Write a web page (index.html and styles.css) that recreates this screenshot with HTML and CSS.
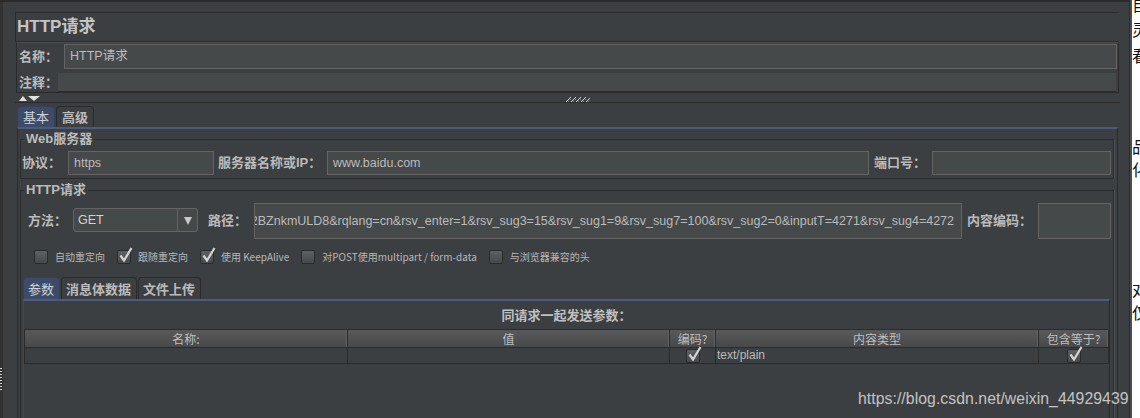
FILE: index.html
```html
<!DOCTYPE html>
<html>
<head>
<meta charset="utf-8">
<title>HTTP请求</title>
<link rel="stylesheet" href="styles.css">
</head>
<body>
<div class="screen">
  <div class="app">
    <div class="gutter">
      <div class="edge"><div class="edge-dots"></div></div>
    </div>
    <div class="main">
      <div class="titlebox">HTTP请求</div>
      <div class="namepanel">
        <div class="nrow nrow-name"><span class="lbl lbl-name">名称：</span><div class="field field-name">HTTP请求</div></div>
        <div class="nrow nrow-comment"><span class="lbl lbl-comment">注释：</span><div class="field field-flat"></div></div>
      </div>
      <div class="splitter">
        <div class="arrows"><span class="tri-up"></span><span class="tri-down"></span></div>
        <svg class="grip" width="24" height="5" viewBox="0 0 24 5">
          <g fill="#d6d6d6">
            <rect x="0" y="4" width="1" height="1"/><rect x="1" y="3" width="1" height="1"/><rect x="2" y="2" width="1" height="1"/><rect x="3" y="1" width="1" height="1"/><rect x="4" y="0" width="1" height="1"/>
            <rect x="5" y="4" width="1" height="1"/><rect x="6" y="3" width="1" height="1"/><rect x="7" y="2" width="1" height="1"/><rect x="8" y="1" width="1" height="1"/><rect x="9" y="0" width="1" height="1"/>
            <rect x="10" y="4" width="1" height="1"/><rect x="11" y="3" width="1" height="1"/><rect x="12" y="2" width="1" height="1"/><rect x="13" y="1" width="1" height="1"/><rect x="14" y="0" width="1" height="1"/>
            <rect x="15" y="4" width="1" height="1"/><rect x="16" y="3" width="1" height="1"/><rect x="17" y="2" width="1" height="1"/><rect x="18" y="1" width="1" height="1"/><rect x="19" y="0" width="1" height="1"/>
            <rect x="20" y="4" width="1" height="1"/><rect x="21" y="3" width="1" height="1"/><rect x="22" y="2" width="1" height="1"/><rect x="23" y="1" width="1" height="1"/>
          </g>
          <g fill="#8a8a8a">
            <rect x="2" y="4" width="1" height="1"/><rect x="4" y="2" width="1" height="1"/><rect x="7" y="4" width="1" height="1"/><rect x="9" y="2" width="1" height="1"/><rect x="12" y="4" width="1" height="1"/><rect x="14" y="2" width="1" height="1"/><rect x="17" y="4" width="1" height="1"/><rect x="19" y="2" width="1" height="1"/><rect x="22" y="4" width="1" height="1"/>
          </g>
        </svg>
      </div>
      <div class="tabs tabs-outer">
        <div class="tab sel">基本</div>
        <div class="tab">高级</div>
      </div>
      <div class="tabbody">
        <fieldset class="group group-web">
          <legend>Web服务器</legend>
          <div class="frow">
            <span class="lbl w-proto">协议：</span>
            <div class="field f-proto">https</div>
            <span class="lbl w-server">服务器名称或IP：</span>
            <div class="field f-server">www.baidu.com</div>
            <span class="lbl w-port">端口号：</span>
            <div class="field f-port"></div>
          </div>
        </fieldset>
        <fieldset class="group group-http">
          <legend>HTTP请求</legend>
          <div class="frow method-row">
            <span class="lbl w-method">方法：</span>
            <div class="combo">
              <span class="combo-text">GET</span>
              <span class="combo-btn"><span class="tri-combo"></span></span>
            </div>
            <span class="lbl w-path">路径：</span>
            <div class="field f-path"><span class="path-text">%2BZnkmULD8&amp;rqlang=cn&amp;rsv_enter=1&amp;rsv_sug3=15&amp;rsv_sug1=9&amp;rsv_sug7=100&amp;rsv_sug2=0&amp;inputT=4271&amp;rsv_sug4=4272</span></div>
            <span class="lbl w-enc">内容编码：</span>
            <div class="field f-enc"></div>
          </div>
          <div class="checks">
            <div class="chk"><span class="cb"></span><span class="chk-lbl">自动重定向</span></div>
            <div class="chk"><span class="cb"><svg class="mark" width="15" height="16" viewBox="0 0 15 16"><path d="M2.5 8.5 L6 13.5 L13.5 1" fill="none" stroke="#d4d4d4" stroke-width="2.2"/></svg></span><span class="chk-lbl">跟随重定向</span></div>
            <div class="chk"><span class="cb"><svg class="mark" width="15" height="16" viewBox="0 0 15 16"><path d="M2.5 8.5 L6 13.5 L13.5 1" fill="none" stroke="#d4d4d4" stroke-width="2.2"/></svg></span><span class="chk-lbl">使用 KeepAlive</span></div>
            <div class="chk"><span class="cb"></span><span class="chk-lbl">对POST使用multipart / form-data</span></div>
            <div class="chk"><span class="cb"></span><span class="chk-lbl">与浏览器兼容的头</span></div>
          </div>
          <div class="tabs tabs-inner">
            <div class="tab sel">参数</div>
            <div class="tab">消息体数据</div>
            <div class="tab">文件上传</div>
          </div>
          <div class="innerbody">
            <div class="caption">同请求一起发送参数：</div>
            <div class="table">
              <div class="th">名称:</div>
              <div class="th">值</div>
              <div class="th">编码?</div>
              <div class="th">内容类型</div>
              <div class="th">包含等于?</div>
              <div class="td"></div>
              <div class="td"></div>
              <div class="td td-c"><span class="cb cb-tbl"><svg class="mark" width="15" height="16" viewBox="0 0 15 16"><path d="M2.5 8.5 L6 13.5 L13.5 1" fill="none" stroke="#d4d4d4" stroke-width="2.2"/></svg></span></div>
              <div class="td td-text">text/plain</div>
              <div class="td td-c"><span class="cb cb-tbl"><svg class="mark" width="15" height="16" viewBox="0 0 15 16"><path d="M2.5 8.5 L6 13.5 L13.5 1" fill="none" stroke="#d4d4d4" stroke-width="2.2"/></svg></span></div>
            </div>
          </div>
        </fieldset>
      </div>
    </div>
  </div>
  <div class="sep"></div>
  <div class="foreign">
    <span class="fc fc1">自</span>
    <span class="fc fc2">灵</span>
    <span class="fc fc3">看</span>
    <span class="fc fc4">品</span>
    <span class="fc fc5">化</span>
    <span class="fc fc6">对</span>
    <span class="fc fc7">仅</span>
  </div>
  <div class="watermark">https://blog.csdn.net/weixin_44929439</div>
</div>
</body>
</html>
```

FILE: styles.css
```css
* { box-sizing: border-box; }
html, body { margin: 0; padding: 0; }
body {
  background: #3c3f41;
  color: #bbbbbb;
  font-family: "Liberation Sans", "Noto Sans CJK SC", sans-serif;
  font-size: 13px;
}
.screen {
  position: relative;
  display: flex;
  width: 1140px;
  height: 418px;
  overflow: hidden;
}
.app {
  flex: none;
  width: 1129px;
  height: 418px;
  border-top: 2px solid #2b2b2b;
  display: flex;
}
.gutter { flex: none; width: 15px; display: flex; }
.edge { width: 3px; background: #303234; }
.edge-dots {
  margin-top: 366px;
  width: 2px;
  height: 22px;
  background: repeating-linear-gradient(to bottom, #d8d8d8 0 1px, transparent 1px 3px);
}
.main {
  flex: none;
  width: 1105px;
  padding-top: 10px;
  display: flex;
  flex-direction: column;
}

/* title */
.titlebox {
  width: 1104px;
  height: 30px;
  border: 1px solid #2b2b2b;
  border-right: 0;
  padding-left: 1px;
  font: bold 17px/28px "Liberation Sans", "Noto Sans CJK SC", sans-serif;
  color: #c4c4c4;
}

/* name / comment */
.namepanel {
  margin-left: 1px;
  width: 1103px;
  height: 51px;
  border: 1px solid #2b2b2b;
  border-top-color: #4d5052;
  padding: 1px 1px 0 1px;
  display: flex;
  flex-direction: column;
}
.nrow { display: flex; align-items: center; }
.nrow-name { height: 25px; }
.nrow-comment { height: 19px; margin-top: 4px; }
.lbl {
  flex: none;
  font: bold 13px/16px "Liberation Sans", "Noto Sans CJK SC", sans-serif;
  color: #bbbbbb;
  white-space: nowrap;
}
.lbl-name { width: 46px; padding-left: 1px; }
.lbl-comment { width: 40px; padding-left: 1px; }
.field {
  flex: none;
  height: 24px;
  background: #45494a;
  border: 1px solid #646464;
  color: #bbbbbb;
  font: 12.5px/22px "Liberation Sans", "Noto Sans CJK SC", sans-serif;
  padding-left: 5px;
  white-space: nowrap;
  overflow: hidden;
}
.field-name { flex: 1; height: 25px; line-height: 23px; }
.field-flat { flex: 1; height: 19px; border: 0; border-bottom: 1px solid #2b2b2b; margin-right: 1px; }

/* splitter */
.splitter {
  width: 1105px;
  height: 11px;
  border-bottom: 1px solid #2b2b2b;
  display: flex;
  align-items: flex-start;
}
.arrows { display: flex; margin: 3px 0 0 4px; }
.tri-up {
  width: 0; height: 0;
  border-left: 4.5px solid transparent;
  border-right: 4.5px solid transparent;
  border-bottom: 5px solid #e0e0e0;
}
.tri-down {
  margin-left: 1px;
  width: 0; height: 0;
  border-left: 6.5px solid transparent;
  border-right: 6.5px solid transparent;
  border-top: 5px solid #e0e0e0;
}
.grip { display: block; margin: 4px 0 0 526px; }

/* tabs */
.tabs { display: flex; height: 21px; }
.tabs-outer { margin: 3px 0 0 2px; }
.tab {
  height: 21px;
  padding: 0 5px;
  border: 1px solid #2b2b2b;
  border-bottom: 0;
  border-radius: 4px 4px 0 0;
  font: bold 13px/20px "Noto Sans CJK SC", sans-serif;
  color: #bbbbbb;
  margin-right: 1px;
  white-space: nowrap;
}
.tab.sel {
  background: #3d4b69;
  font-weight: normal;
  color: #cdd2da;
  border-color: #35405a;
}
.tabbody {
  flex: 1;
  margin-left: 2px;
  width: 1101px;
  border-top: 2px solid #4a5b7d;
  border-left: 1px solid #2b2b2b;
  border-right: 1px solid #2b2b2b;
  padding: 0 2px;
}

/* group boxes */
.group {
  margin: 2px 0 0 0;
  width: 1094px;
  border: 1px solid #2a2c2e;
  box-shadow: 1px 0 0 #4e5153;
  padding: 4px 0 3px 0;
}
.group legend {
  margin-left: 3px;
  padding: 0 2px;
  font: bold 13px/16px "Liberation Sans", "Noto Sans CJK SC", sans-serif;
  color: #bbbbbb;
}
.group-http { margin-top: 3px; padding-top: 5px; height: 260px; }
.frow { display: flex; align-items: center; height: 24px; }
.w-proto { width: 47px; padding-left: 1px; }
.f-proto { width: 146px; }
.w-server { width: 113px; padding-left: 4px; }
.f-server { width: 542px; }
.w-port { width: 63px; padding-left: 5px; }
.f-port { width: 179px; }

.method-row { height: 36px; }
.w-method { width: 52px; padding-left: 7px; }
.combo {
  flex: none;
  width: 125px;
  height: 24px;
  margin-top: -2px;
  display: flex;
  border: 1px solid #646464;
  border-radius: 3px;
  background: #45494a;
}
.combo-text {
  flex: 1;
  padding-left: 4px;
  font: 12.5px/22px "Liberation Sans", sans-serif;
  color: #d2d2d2;
}
.combo-btn {
  width: 20px;
  border-left: 1px solid #646464;
  display: flex;
  align-items: center;
  justify-content: center;
}
.tri-combo {
  width: 0; height: 0;
  border-left: 4.5px solid transparent;
  border-right: 4.5px solid transparent;
  border-top: 8px solid #c8c8c8;
  margin-top: 1px;
}
.w-path { width: 56px; padding-left: 10px; }
.f-path {
  width: 708px;
  height: 36px;
  display: flex;
  justify-content: flex-end;
  align-items: center;
  padding: 0 7px 0 0;
  font-size: 12.5px;
}
.path-text { flex: none; }
.w-enc { width: 76px; padding-left: 5px; }
.f-enc { width: 73px; height: 36px; }

/* checkboxes */
.checks {
  display: flex;
  align-items: center;
  height: 14px;
  margin-top: 11px;
  padding-left: 1px;
}
.chk { display: flex; align-items: center; margin-left: 12px; }
.cb {
  flex: none;
  display: block;
  width: 14px;
  height: 14px;
  border: 1px solid #2b2b2b;
  border-radius: 2px;
  background: linear-gradient(#5d6163, #46494b);
}
.mark { display: block; margin: -4px 0 0 0; }
.chk-lbl {
  margin-left: 7px;
  font: 10px/14px "Noto Sans CJK SC", sans-serif;
  color: #b8b8b8;
  white-space: nowrap;
}

/* inner tabs */
.tabs-inner { margin: 13px 0 0 2px; height: 22px; }
.tabs-inner .tab { height: 22px; line-height: 21px; padding: 0 5px 0 4px; }
.innerbody {
  margin-left: 2px;
  width: 1087px;
  height: 140px;
  border-top: 2px solid #4a5b7d;
  border-left: 1px solid #474a4c;
  border-right: 1px solid #2b2b2b;
}
.caption {
  height: 28px;
  font: bold 13px/30px "Liberation Sans", "Noto Sans CJK SC", sans-serif;
  color: #c0c0c0;
  text-align: center;
}
.table {
  width: 1084px;
  display: grid;
  grid-template-columns: 323px 322px 46px 323px 70px;
  border-top: 1px solid #2b2b2b;
  border-left: 1px solid #2b2b2b;
}
.th {
  height: 18px;
  border-right: 1px solid #2b2b2b;
  border-bottom: 1px solid #2b2b2b;
  box-shadow: inset -1px 0 0 #5f6264;
  background: linear-gradient(#57595b, #47494b);
  font: 12px/17px "Noto Sans CJK SC", sans-serif;
  color: #bfbfbf;
  text-align: center;
  white-space: nowrap;
}
.td {
  height: 16px;
  border-right: 1px solid #2b2b2b;
  border-bottom: 1px solid #2b2b2b;
  font: 12px/15px "Liberation Sans", sans-serif;
  color: #bbbbbb;
}
.td-c { display: flex; justify-content: center; align-items: center; }
.cb-tbl { width: 14px; height: 14px; }
.td-text { padding-left: 1px; }

/* right side */
.sep {
  flex: none;
  width: 3px;
  border-left: 1px solid #2b2b2b;
  background: #4b4e50;
}
.foreign {
  flex: none;
  width: 8px;
  background: #ffffff;
  overflow: hidden;
  display: flex;
  flex-direction: column;
}
.fc {
  flex: none;
  display: block;
  height: 17px;
  font: 16px/17px "Noto Sans CJK SC", sans-serif;
  color: #111111;
  white-space: nowrap;
}
.fc1 { margin-top: -4px; }
.fc2 { margin-top: 8px; }
.fc3 { margin-top: 9px; }
.fc4 { margin-top: 74px; }
.fc5 { margin-top: 6px; }
.fc6 { margin-top: 103px; }
.fc7 { margin-top: 6px; }

.watermark {
  position: absolute;
  left: 858px;
  top: 390px;
  font: 15.8px/18px "Liberation Sans", sans-serif;
  letter-spacing: 0.05px;
  color: rgba(226, 226, 226, 0.82);
  white-space: nowrap;
}
```
